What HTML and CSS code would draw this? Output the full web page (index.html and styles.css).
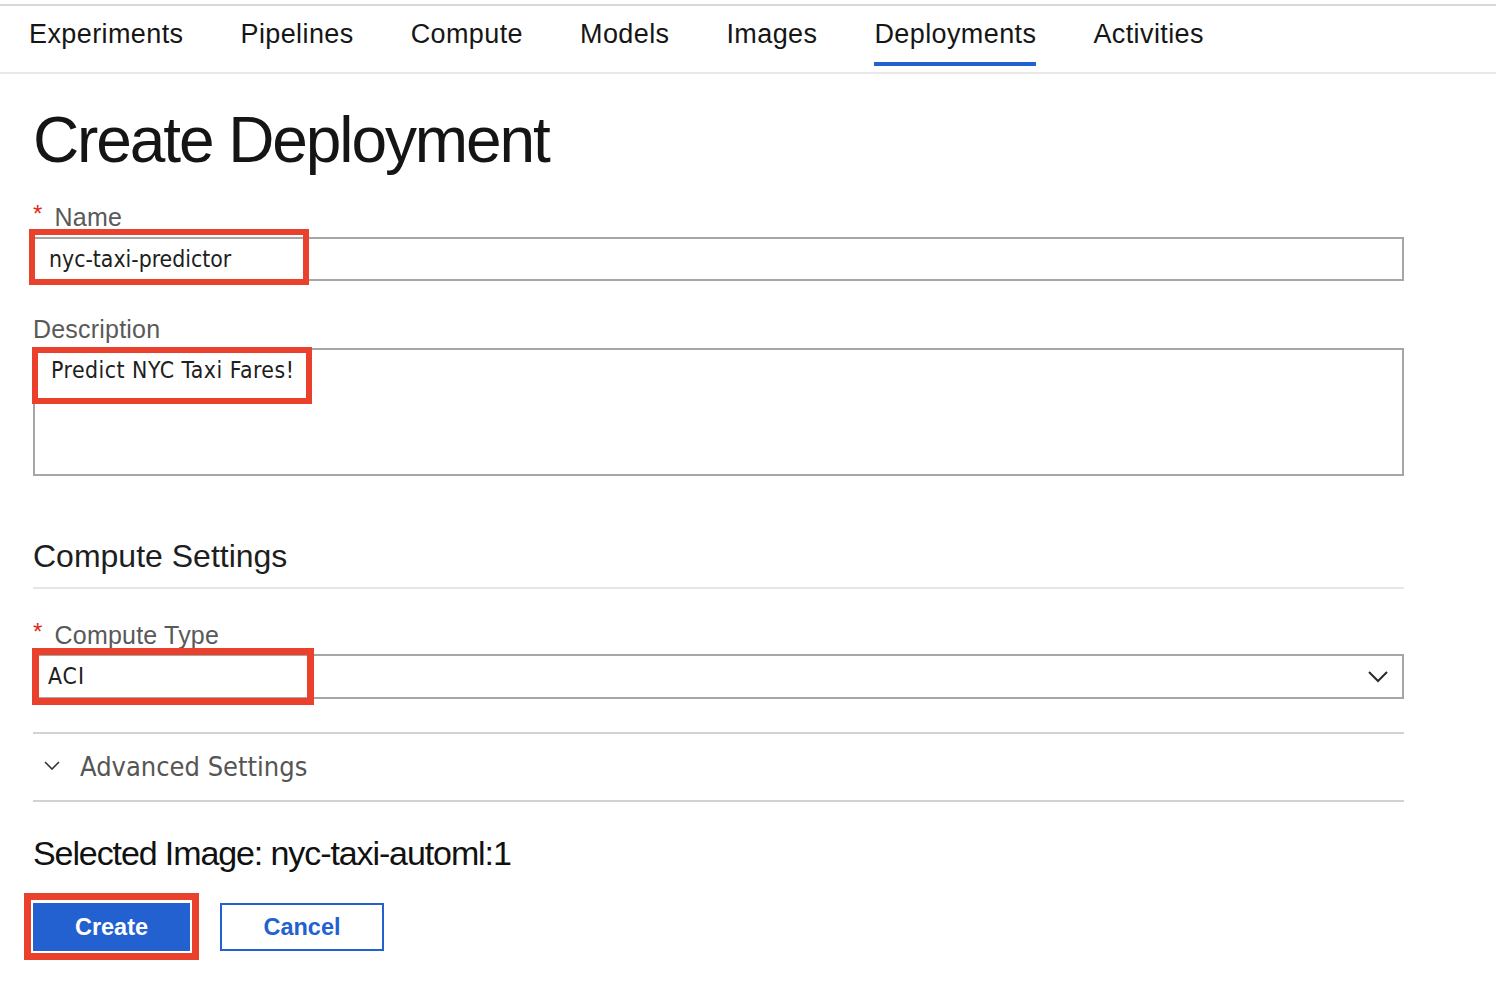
FILE: index.html
```html
<!DOCTYPE html>
<html lang="en">
<head>
<meta charset="utf-8">
<title>Create Deployment</title>
<link rel="stylesheet" href="styles.css">
</head>
<body>
<nav class="tabs">
  <a class="tab">Experiments</a>
  <a class="tab">Pipelines</a>
  <a class="tab">Compute</a>
  <a class="tab">Models</a>
  <a class="tab">Images</a>
  <a class="tab active">Deployments</a>
  <a class="tab">Activities</a>
</nav>
<main class="page">
  <h1 class="title">Create Deployment</h1>

  <div class="field field-name">
    <div class="label"><span class="req">*</span>Name</div>
    <div class="input">
      <span class="value">nyc-taxi-predictor</span>
      <span class="mark mark-name"></span>
    </div>
  </div>

  <div class="field field-desc">
    <div class="label">Description</div>
    <div class="textarea">
      <span class="value value-desc">Predict NYC Taxi Fares!</span>
      <span class="mark mark-desc"></span>
    </div>
  </div>

  <h2 class="section">Compute Settings</h2>

  <div class="field field-type">
    <div class="label"><span class="req">*</span>Compute Type</div>
    <div class="input select">
      <span class="value value-aci">ACI</span>
      <svg class="chev" width="20" height="12" viewBox="0 0 20 12"><polyline points="1,1 10,10 19,1" fill="none" stroke="#2b2b2b" stroke-width="2"/></svg>
      <span class="mark mark-type"></span>
    </div>
  </div>

  <div class="advanced">
    <svg class="adv-chev" width="16" height="9" viewBox="0 0 16 9"><polyline points="1,1 8,8 15,1" fill="none" stroke="#333" stroke-width="1.6"/></svg>
    <span class="adv-text">Advanced Settings</span>
  </div>

  <p class="selected">Selected Image: nyc-taxi-automl:1</p>

  <div class="actions">
    <div class="btn-wrap">
      <button class="btn btn-primary">Create</button>
      <span class="mark mark-create"></span>
    </div>
    <button class="btn btn-secondary">Cancel</button>
  </div>
</main>
</body>
</html>
```

FILE: styles.css
```css
html, body {
  margin: 0;
  padding: 0;
  background: #ffffff;
}

body {
  font-family: "Liberation Sans", Arial, Helvetica, sans-serif;
  color: #1b1b1b;
}

.tabs {
  margin-top: 4px;
  height: 66px;
  border-top: 2px solid #d9d9d9;
  border-bottom: 2px solid #e8e8e8;
  display: flex;
  gap: 57px;
  padding-left: 29px;
}

.tab {
  position: relative;
  font-size: 27px;
  letter-spacing: 0.4px;
  line-height: 32px;
  padding-top: 12px;
  color: #161616;
  white-space: nowrap;
}

.tab.active::after {
  content: "";
  position: absolute;
  left: 0;
  right: 0;
  bottom: 6px;
  height: 4px;
  background: #2361d1;
}

.page {
  width: 1371px;
  padding: 0 0 40px 33px;
}

.title {
  margin: 31px 0 0;
  font-size: 64px;
  line-height: 70px;
  font-weight: normal;
  letter-spacing: -2.1px;
  color: #151515;
}

.field {
  display: flex;
  flex-direction: column;
}

.field-name { margin-top: 28px; }
.field-desc { margin-top: 34px; }
.field-type { margin-top: 32px; }

.label {
  display: flex;
  align-items: flex-start;
  font-size: 25px;
  line-height: 28px;
  letter-spacing: 0.2px;
  color: #595959;
}

.req {
  color: #e0271e;
  font-size: 24px;
  line-height: 24px;
  margin-top: -1px;
  margin-right: 12px;
}

.input {
  position: relative;
  margin-top: 6px;
  height: 44px;
  box-sizing: border-box;
  border: 2px solid #a6a6a6;
  display: flex;
  align-items: center;
  padding-left: 14px;
}

.value {
  font-family: "DejaVu Sans Condensed", "DejaVu Sans", sans-serif;
  font-stretch: condensed;
  font-size: 22.8px;
  line-height: 40px;
  color: #202020;
}

.value-desc {
  letter-spacing: 0.5px;
}

.value-aci {
  letter-spacing: 1px;
}

.textarea {
  position: relative;
  margin-top: 5px;
  height: 128px;
  box-sizing: border-box;
  border: 2px solid #a6a6a6;
  padding: 6px 0 0 16px;
}

.textarea .value {
  line-height: 28px;
  display: block;
}

.select {
  margin-top: 5px;
  height: 45px;
  padding-left: 13px;
  padding-right: 14px;
  justify-content: space-between;
}

.select .value {
  line-height: 41px;
}

.chev {
  display: block;
}

.mark {
  position: absolute;
  box-sizing: border-box;
  border: 6px solid #e9412b;
  pointer-events: none;
}

.mark-name {
  left: -6px;
  top: -10px;
  width: 280px;
  height: 56px;
}

.mark-desc {
  left: -3px;
  top: -3px;
  width: 280px;
  height: 57px;
}

.mark-type {
  left: -3px;
  top: -8px;
  width: 282px;
  height: 57px;
  border-width: 7px;
}

.section {
  margin: 62px 0 0;
  font-size: 32px;
  line-height: 36px;
  font-weight: normal;
  color: #1e1e1e;
  padding-bottom: 13px;
  border-bottom: 2px solid #e6e6e6;
}

.advanced {
  margin-top: 33px;
  border-top: 2px solid #d2d2d2;
  border-bottom: 2px solid #d2d2d2;
  display: flex;
  align-items: center;
  padding: 17px 0 17px 11px;
}

.adv-chev {
  display: block;
  margin-right: 20px;
  margin-top: -3px;
}

.adv-text {
  font-family: "DejaVu Sans Condensed", "DejaVu Sans", sans-serif;
  font-stretch: condensed;
  font-size: 27px;
  line-height: 32px;
  color: #555555;
}

.selected {
  margin: 31px 0 0;
  font-size: 34px;
  line-height: 40px;
  letter-spacing: -1.1px;
  color: #111111;
}

.actions {
  margin-top: 30px;
  display: flex;
  gap: 30px;
}

.btn-wrap {
  position: relative;
}

.btn {
  display: block;
  height: 48px;
  box-sizing: border-box;
  font-family: "Liberation Sans", Arial, sans-serif;
  font-size: 23.5px;
  font-weight: bold;
  padding: 0;
  cursor: pointer;
}

.btn-primary {
  width: 157px;
  background: #2361d1;
  color: #ffffff;
  border: none;
}

.btn-secondary {
  width: 164px;
  background: #ffffff;
  color: #2361d1;
  border: 2px solid #2361d1;
}

.mark-create {
  left: -9px;
  top: -10px;
  width: 175px;
  height: 67px;
  border-width: 7px;
}
```
